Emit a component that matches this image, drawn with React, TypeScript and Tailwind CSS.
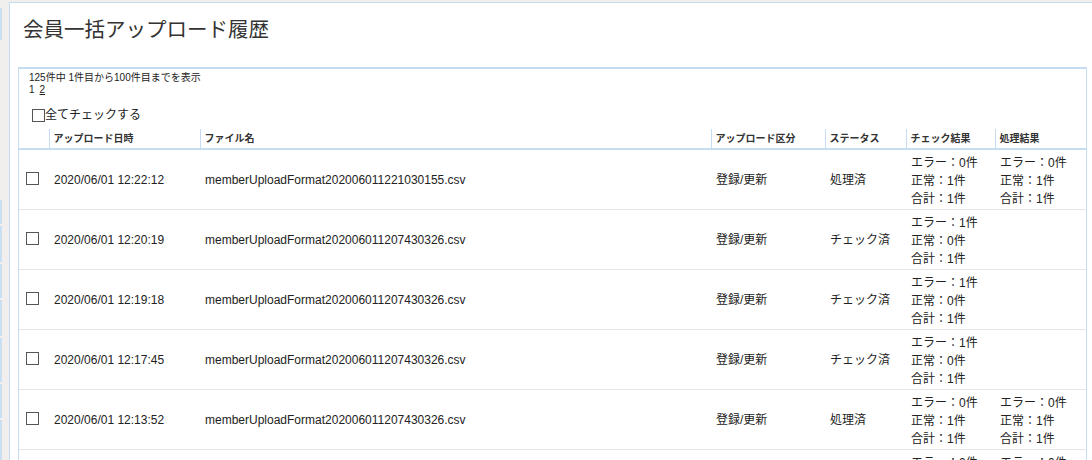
const rows = [
  {
    date: "2020/06/01 12:22:12",
    file: "memberUploadFormat202006011221030155.csv",
    kind: "登録/更新",
    status: "処理済",
    check: ["エラー：0件", "正常：1件", "合計：1件"],
    result: ["エラー：0件", "正常：1件", "合計：1件"],
  },
  {
    date: "2020/06/01 12:20:19",
    file: "memberUploadFormat202006011207430326.csv",
    kind: "登録/更新",
    status: "チェック済",
    check: ["エラー：1件", "正常：0件", "合計：1件"],
    result: [],
  },
  {
    date: "2020/06/01 12:19:18",
    file: "memberUploadFormat202006011207430326.csv",
    kind: "登録/更新",
    status: "チェック済",
    check: ["エラー：1件", "正常：0件", "合計：1件"],
    result: [],
  },
  {
    date: "2020/06/01 12:17:45",
    file: "memberUploadFormat202006011207430326.csv",
    kind: "登録/更新",
    status: "チェック済",
    check: ["エラー：1件", "正常：0件", "合計：1件"],
    result: [],
  },
  {
    date: "2020/06/01 12:13:52",
    file: "memberUploadFormat202006011207430326.csv",
    kind: "登録/更新",
    status: "処理済",
    check: ["エラー：0件", "正常：1件", "合計：1件"],
    result: ["エラー：0件", "正常：1件", "合計：1件"],
  },
  {
    date: "2020/06/01 12:10:02",
    file: "memberUploadFormat202006011207430326.csv",
    kind: "登録/更新",
    status: "処理済",
    check: ["エラー：0件", "正常：1件", "合計：1件"],
    result: ["エラー：0件", "正常：1件", "合計：1件"],
  },
];

const Box = () => (
  <span className="inline-block h-[13px] w-[13px] border border-[#555] bg-white" />
);

const Lines = ({ lines }: { lines: string[] }) => (
  <div className="flex flex-col">
    {lines.map((l, i) => (
      <span key={i} className="leading-[18px]">
        {l}
      </span>
    ))}
  </div>
);

const App = () => {
  return (
    <div
      className="flex h-[460px] w-[1092px] overflow-hidden bg-[#f0efed] text-[#222]"
      style={{ fontFamily: '"Liberation Sans", "Noto Sans CJK JP", sans-serif' }}
    >
      {/* left strip */}
      <div className="flex w-[9px] shrink-0 flex-col pt-[8px]">
        <div className="h-[32px] w-[2px] bg-[#c9dff3]" />
        <div className="h-[160px]" />
        <div className="h-[24px] w-[2px] bg-[#c9dff3]" />
        <div className="mt-[2px] h-[36px] w-[2px] bg-[#c9dff3]" />
        <div className="mt-[2px] h-[34px] w-[2px] bg-[#c9dff3]" />
        <div className="mt-[2px] h-[36px] w-[2px] bg-[#c9dff3]" />
        <div className="mt-[2px] h-[44px] w-[2px] bg-[#c9dff3]" />
        <div className="mt-[2px] h-[34px] w-[2px] bg-[#c9dff3]" />
        <div className="mt-[2px] h-[40px] w-[2px] bg-[#c9dff3]" />
      </div>

      {/* main panel */}
      <div className="mt-[2px] flex-1 border-t border-l border-[#c5dcf2] bg-white">
        <h1 className="pl-[13px] pt-[13px] text-[20.5px] leading-[28px] text-[#333]">
          会員一括アップロード履歴
        </h1>

        <div className="ml-[8px] mt-[23px] w-[1069px] border-x border-t-2 border-[#c5dcf2]">
          <div className="pl-[10px] pt-[3px] text-[10px] leading-[12px]">
            <div>125件中 1件目から100件目までを表示</div>
            <div>
              1<span className="ml-[5px] underline">2</span>
            </div>
          </div>
          <div className="mt-[12px] flex items-center pl-[13px] text-[12px] leading-[14px]">
            <Box />
            <span>全てチェックする</span>
          </div>

          <table className="mt-[7px] w-[1067px] table-fixed border-collapse text-[12px]">
            <colgroup>
              <col className="w-[30px]" />
              <col className="w-[151px]" />
              <col className="w-[511px]" />
              <col className="w-[114px]" />
              <col className="w-[81px]" />
              <col className="w-[89px]" />
              <col className="w-[91px]" />
            </colgroup>
            <thead>
              <tr className="h-[20px] border-b-2 border-[#c5dcf2] text-left text-[10px] font-bold text-[#333]">
                <th />
                {["アップロード日時", "ファイル名", "アップロード区分", "ステータス", "チェック結果", "処理結果"].map(
                  (h) => (
                    <th key={h} className="border-l border-[#c5dcf2] pl-[4px] font-bold">
                      {h}
                    </th>
                  )
                )}
              </tr>
            </thead>
            <tbody>
              {rows.map((r, i) => (
                <tr key={i} className="h-[60px] border-b border-[#e6e6e6] align-middle">
                  <td className="pl-[7px] pt-[4px]">
                    <Box />
                  </td>
                  <td className="pl-[5px] pt-[2px]">{r.date}</td>
                  <td className="pl-[5px] pt-[2px]">{r.file}</td>
                  <td className="pl-[5px] pt-[2px]">{r.kind}</td>
                  <td className="pl-[5px] pt-[2px]">{r.status}</td>
                  <td className="pl-[5px] pt-[3px]">
                    <Lines lines={r.check} />
                  </td>
                  <td className="pl-[5px] pt-[3px]">
                    <Lines lines={r.result} />
                  </td>
                </tr>
              ))}
            </tbody>
          </table>
        </div>
      </div>
    </div>
  );
};

export default App;
